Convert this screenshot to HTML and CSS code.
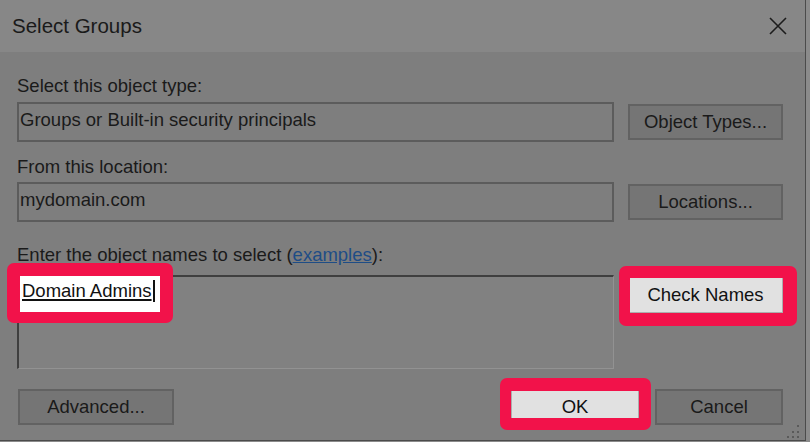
FILE: index.html
```html
<!DOCTYPE html>
<html>
<head>
<meta charset="utf-8">
<link rel="stylesheet" href="styles.css">
</head>
<body>
<div class="dialog">
  <div class="titlebar">
    <span class="title">Select Groups</span>
    <svg class="close" viewBox="0 0 18 18" width="18" height="18"><path d="M1 1 L17 17 M17 1 L1 17" stroke="#1c1c1c" stroke-width="1.6" fill="none"/></svg>
  </div>
  <div class="content">
    <div class="label l1">Select this object type:</div>
    <div class="row">
      <div class="field">Groups or Built-in security principals</div>
      <button class="btn">Object Types...</button>
    </div>
    <div class="label l2">From this location:</div>
    <div class="row">
      <div class="field">mydomain.com</div>
      <button class="btn">Locations...</button>
    </div>
    <div class="label l3">Enter the object names to select (<span class="link">examples</span>):</div>
    <div class="row top">
      <div class="names">
        <div class="entry"><span class="typed">Domain Admins</span><span class="caret"></span></div>
        <span class="mark m-entry"></span>
      </div>
      <div class="side">
        <button class="btn lit check">Check Names</button>
        <span class="mark m-check"></span>
      </div>
    </div>
    <div class="footer">
      <button class="btn adv">Advanced...</button>
      <div class="spacer"></div>
      <div class="okwrap">
        <button class="btn lit ok">OK</button>
        <span class="mark m-ok"></span>
      </div>
      <button class="btn cancel">Cancel</button>
    </div>
  </div>
  <svg class="grip" viewBox="0 0 15 15" width="15" height="15">
    <rect x="12" y="2" width="2" height="2" fill="#5a5a5a"/>
    <rect x="7" y="8" width="2" height="2" fill="#5a5a5a"/>
    <rect x="12" y="8" width="2" height="2" fill="#5a5a5a"/>
    <rect x="2" y="13" width="2" height="2" fill="#5a5a5a"/>
    <rect x="7" y="13" width="2" height="2" fill="#5a5a5a"/>
    <rect x="12" y="13" width="2" height="2" fill="#5a5a5a"/>
  </svg>
</div>
</body>
</html>
```
FILE: styles.css
```css
* { box-sizing: border-box; }
html, body { margin: 0; padding: 0; }
body {
  background: #8b8b8b;
  width: 810px;
  height: 442px;
  overflow: hidden;
  font-family: "Liberation Sans", Arial, sans-serif;
  color: #1a1a1a;
}
.dialog {
  width: 806px;
  height: 441px;
  border-right: 1px solid #4b4b4b;
  border-bottom: 1px solid #4b4b4b;
  background: #7e7e7e;
  position: relative;
  display: flex;
  flex-direction: column;
}
.titlebar {
  height: 52px;
  background: #878787;
  display: flex;
  align-items: center;
  justify-content: space-between;
  padding: 0 18px 0 12px;
}
.title { font-size: 20.5px; }
.close { display: block; }
.content {
  padding: 23px 22px 0 17px;
  display: flex;
  flex-direction: column;
}
.label { font-size: 18.5px; line-height: 22px; }
.l1 { margin-bottom: 5px; }
.l2 { margin-top: 14px; margin-bottom: 4px; }
.l3 { margin-top: 22px; margin-bottom: 9px; }
.link { color: #1e4d86; text-decoration: underline; }
.row {
  display: grid;
  grid-template-columns: 597px 155px;
  column-gap: 14px;
  align-items: center;
}
.row.top { align-items: start; }
.field {
  height: 40px;
  border: 2px solid #5c5c5c;
  display: flex;
  align-items: center;
  padding: 0 0 4px 1px;
  font-size: 18.5px;
}
.btn {
  height: 36px;
  font-family: inherit;
  font-size: 18.5px;
  background: #757575;
  border: 2px solid #626262;
  color: #1a1a1a;
  padding: 0;
  margin: 0;
}
.btn.lit { background: #e1e1e1; border: 1px solid #adadad; color: #111; }
.names {
  height: 94px;
  border-top: 2px solid #3f3f3f;
  border-left: 2px solid #3f3f3f;
  border-right: 1px solid #929292;
  border-bottom: 1px solid #929292;
  background: #818181;
  position: relative;
}
.entry {
  display: flex;
  align-items: center;
  width: 140px;
  height: 36px;
  margin: -1px 0 0 1px;
  padding: 0 0 6px 2px;
  background: #ffffff;
  font-size: 18.5px;
  color: #111;
}
.typed {
  text-decoration: underline;
  text-decoration-thickness: 2px;
  text-underline-offset: 2px;
}
.caret {
  display: block;
  width: 0;
  height: 22px;
  border-left: 2px solid #111;
  margin-left: 1px;
}
.side { position: relative; }
.check { width: 155px; margin-top: 2px; display: block; }
.mark {
  position: absolute;
  border-style: solid;
  border-color: #f2124a;
  border-radius: 7px;
  pointer-events: none;
}
.m-entry { left: -12px; top: -14px; width: 166px; height: 60px; border-width: 13px 13px 11px 13px; }
.m-check { left: -9px; top: -9px; width: 178px; height: 60px; border-width: 12px 14px 13px 11px; }
.footer {
  display: flex;
  align-items: center;
  margin-top: 20px;
}
.adv { width: 156px; margin-left: 1px; }
.spacer { flex: 1; }
.okwrap { position: relative; }
.ok { width: 128px; display: block; border: 2px solid #0078d7; }
.m-ok { left: -11px; top: -11px; width: 151px; height: 52px; border-width: 13px 12px 12px 11px; }
.cancel { width: 128px; margin-left: 16px; }
.grip { position: absolute; right: 5px; bottom: 2px; }
```
